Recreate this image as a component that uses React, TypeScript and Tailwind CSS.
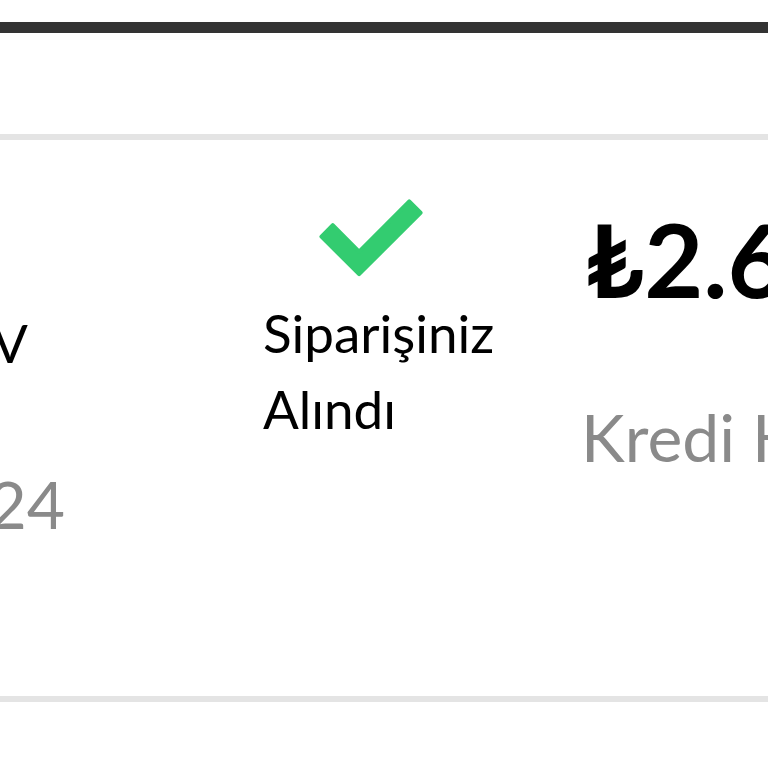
import React from 'react';

const CheckMark: React.FC = () => (
  <svg width="110" height="85" viewBox="0 0 110 85" fill="none" className="ml-[53px] block">
    <path
      d="M16.76 29.24 L43.1 55.59 L93.24 5.44 L104.56 16.76 L43.1 78.21 L5.44 40.56 Z"
      fill="#33cc70"
      stroke="#33cc70"
      strokeWidth="4"
      strokeLinejoin="round"
    />
  </svg>
);

export default function App() {
  return (
    <div className="h-[768px] w-[768px] overflow-hidden bg-white font-['Lato','Noto_Sans',sans-serif] text-black">
      <div className="h-[22px]" />
      <div className="h-[11px] bg-[#333333]" />
      <div className="h-[101px]" />
      <div className="h-[6px] bg-[#e4e4e4]" />

      <div className="flex h-[556px] items-start">
        {/* product column, mostly scrolled out to the left */}
        <div className="flex w-[65px] shrink-0 flex-col items-end whitespace-nowrap pt-[176px]">
          <span className="mr-[37px] text-[53px] leading-none">Smart TV</span>
          <span className="mt-[102px] text-[66px] leading-none text-[#8a8a8a]">12.03.2024</span>
        </div>

        {/* status */}
        <div className="ml-[198px] flex w-[260px] shrink-0 flex-col pt-[56px]">
          <CheckMark />
          <p className="mt-[14px] text-[53px] leading-[76px]">Siparişiniz Alındı</p>
        </div>

        {/* total */}
        <div className="ml-[62px] flex shrink-0 flex-col whitespace-nowrap pt-[68px]">
          <span className="text-[102px] font-bold leading-none">₺2.649,00</span>
          <span className="-ml-[4px] mt-[94px] text-[66px] leading-none text-[#8a8a8a]">Kredi Kartı</span>
        </div>
      </div>

      <div className="h-[6px] bg-[#e4e4e4]" />
    </div>
  );
}
